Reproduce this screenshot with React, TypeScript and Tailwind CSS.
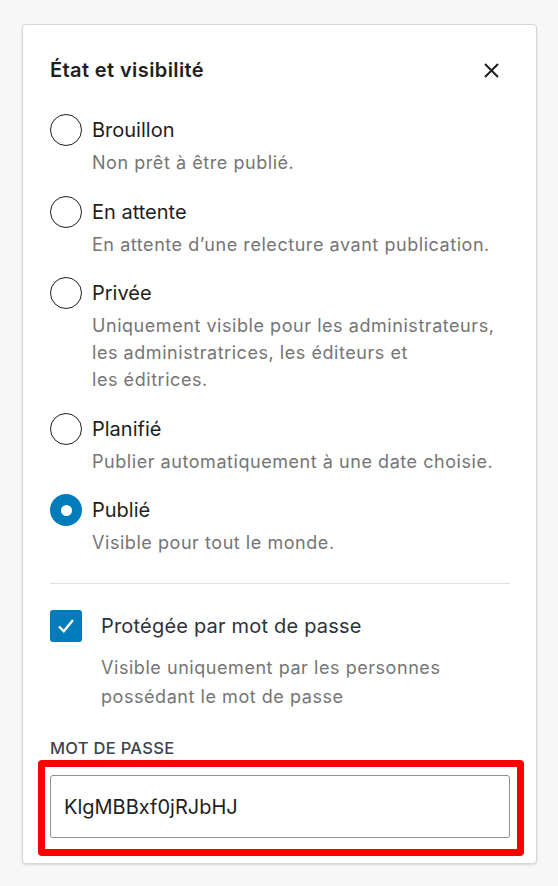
import React from "react";

interface IStatusOption {
  label: string;
  help: string[];
  checked?: boolean;
}

const statusList: IStatusOption[] = [
  { label: "Brouillon", help: ["Non prêt à être publié."] },
  { label: "En attente", help: ["En attente d’une relecture avant publication."] },
  {
    label: "Privée",
    help: [
      "Uniquement visible pour les administrateurs,",
      "les administratrices, les éditeurs et",
      "les éditrices.",
    ],
  },
  { label: "Planifié", help: ["Publier automatiquement à une date choisie."] },
  { label: "Publié", help: ["Visible pour tout le monde."], checked: true },
];

const Radio: React.FC<{ checked?: boolean }> = ({ checked }) =>
  checked ? (
    <span className="w-8 h-8 rounded-full bg-[#007cba] flex items-center justify-center shrink-0">
      <span className="w-[11px] h-[11px] rounded-full bg-white" />
    </span>
  ) : (
    <span className="w-8 h-8 rounded-full border-[1.5px] border-[#1e1e1e] bg-white shrink-0" />
  );

const App: React.FC = () => {
  return (
    <div
      className="min-h-[886px] bg-[#f7f7f7] pt-6 pl-[22px] pr-[21px] text-[#1e1e1e]"
      style={{ fontFamily: "Inter, 'Noto Sans', sans-serif" }}
    >
      <div className="bg-white border border-[#d7d7d7] rounded-[4px] shadow-sm pt-[31px] pb-[7px] pl-[15px] pr-[12px]">
        <div className="flex items-center justify-between pl-[12px] pr-[25px] h-7">
          <h2 className="text-[20px] font-semibold tracking-[0.4px]">État et visibilité</h2>
          <svg width="15" height="15" viewBox="0 0 15 15">
            <path d="M1 1L14 14M14 1L1 14" stroke="#1e1e1e" strokeWidth="2" />
          </svg>
        </div>

        <ul className="mt-[30px] px-[12px] flex flex-col gap-[19.5px]">
          {statusList.map((item) => (
            <li key={item.label}>
              <div className="flex items-center gap-[10px] h-8">
                <Radio checked={item.checked} />
                <span className="text-[20px] leading-8">{item.label}</span>
              </div>
              <p className="mt-[3px] pl-[42px] text-[18px] tracking-[0.55px] leading-[27px] text-[#757575]">
                {item.help.map((line) => (
                  <span key={line} className="block">
                    {line}
                  </span>
                ))}
              </p>
            </li>
          ))}
        </ul>

        <div className="ml-[12px] mr-[14px] mt-[27px] border-t border-[#e0e0e0]" />

        <div className="px-[12px] mt-[26px]">
          <div className="flex items-center gap-[19px] h-8">
            <span className="w-8 h-8 rounded-[3px] bg-[#007cba] flex items-center justify-center shrink-0">
              <svg width="22" height="22" viewBox="0 0 22 22">
                <path d="M4 11.5L8.8 16.3L18 5" stroke="white" strokeWidth="2.4" fill="none" />
              </svg>
            </span>
            <span className="text-[20px] tracking-[0.2px] text-[#2c3338]">Protégée par mot de passe</span>
          </div>
          <p className="mt-[10.5px] pl-[51px] text-[18px] tracking-[0.55px] leading-[29px] text-[#757575]">
            Visible uniquement par les personnes
            <br />
            possédant le mot de passe
          </p>
        </div>

        <div className="mt-[27.5px] px-[12px] text-[16.5px] font-medium uppercase tracking-[0.3px] text-[#3c434a] leading-5">
          Mot de passe
        </div>
        <div className="mt-[2px] border-[7px] border-[#ff0000] rounded-[4px] pl-[5px] pr-[7px] pt-[8px] pb-[11px]">
          <div className="h-[63px] border border-[#8c8f94] rounded-[3px] flex items-center px-[13px] text-[20px] text-[#1e1e1e]">
            KlgMBBxf0jRJbHJ
          </div>
        </div>
      </div>
    </div>
  );
};

export default App;
